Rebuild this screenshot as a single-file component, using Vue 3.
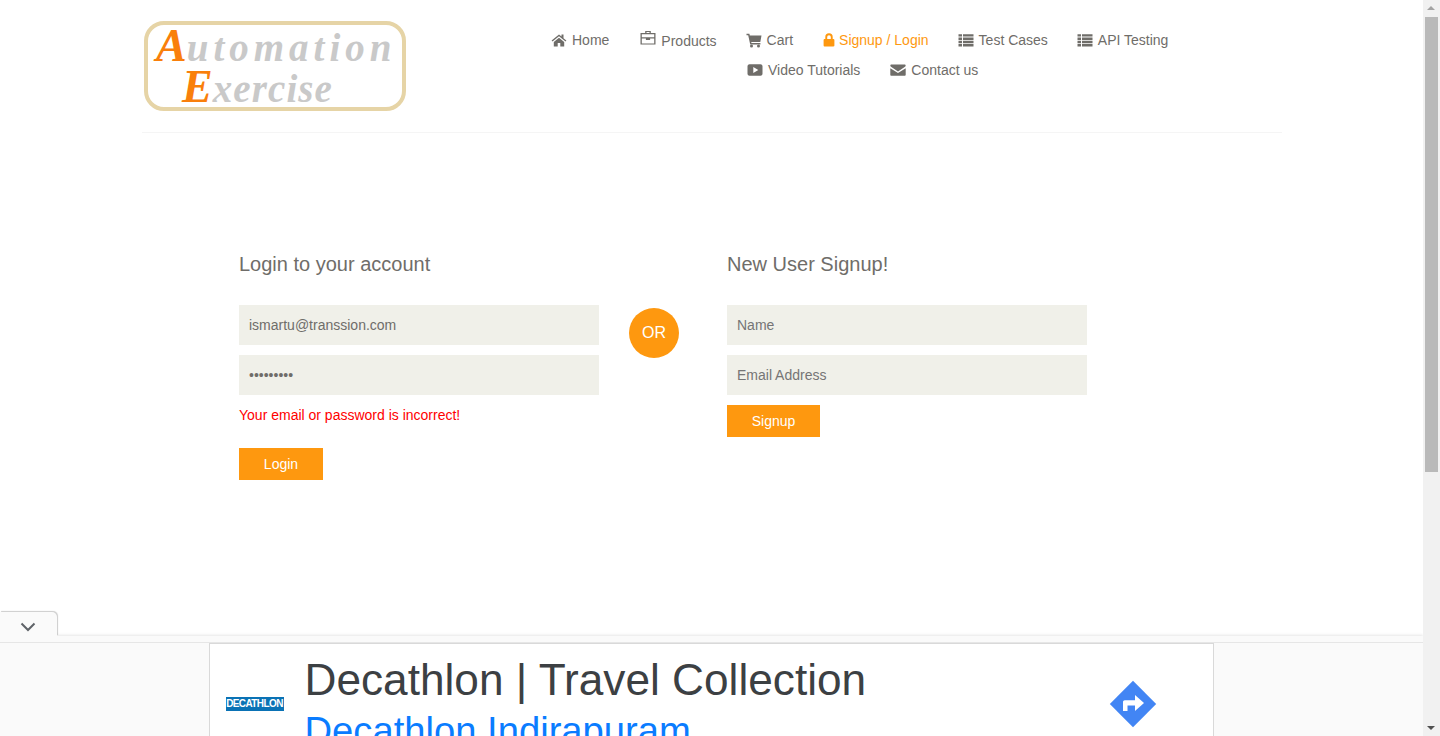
<template>
  <div class="window">
    <div class="page">
      <header class="header">
        <a class="logo">
          <div class="logo-line first"><span class="cap">A</span>utomation</div>
          <div class="logo-line second"><span class="cap">E</span>xercise</div>
        </a>
        <nav class="nav">
          <div class="nav-row">
            <a v-for="item in firstRow" :key="item.label" class="nav-link" :class="{ active: item.active, lower: item.lower }">
              <svg class="icon" :class="item.icon" viewBox="0 0 16 16" fill="currentColor" v-html="icons[item.icon]"></svg>
              <span>{{ item.label }}</span>
            </a>
          </div>
          <div class="nav-row second-row">
            <a v-for="item in secondRow" :key="item.label" class="nav-link">
              <svg class="icon" :class="item.icon" viewBox="0 0 16 16" fill="currentColor" v-html="icons[item.icon]"></svg>
              <span>{{ item.label }}</span>
            </a>
          </div>
        </nav>
      </header>

      <section class="forms">
        <div class="form-col">
          <h2>Login to your account</h2>
          <form class="form" @submit.prevent>
            <input type="email" value="ismartu@transsion.com" placeholder="Email Address" />
            <input type="password" value="123456789" placeholder="Password" />
            <p class="error">Your email or password is incorrect!</p>
            <button class="btn login">Login</button>
          </form>
        </div>
        <div class="or">OR</div>
        <div class="form-col">
          <h2>New User Signup!</h2>
          <form class="form" @submit.prevent>
            <input type="text" placeholder="Name" />
            <input type="email" placeholder="Email Address" />
            <button class="btn signup">Signup</button>
          </form>
        </div>
      </section>

      <div class="ad-bar">
        <div class="ad-tab">
          <svg width="16" height="10" viewBox="0 0 16 10" fill="none" stroke="#5f6368" stroke-width="2"><path d="M1.5 1.5 8 8l6.500-6.500" /></svg>
        </div>
        <div class="ad-strip"></div>
        <div class="ad-body">
          <div class="ad-box">
            <div class="ad-logo">DECATHLON</div>
            <div class="ad-text">
              <div class="ad-title">Decathlon | Travel Collection</div>
              <div class="ad-sub">Decathlon Indirapuram</div>
            </div>
            <svg class="ad-arrow" width="48" height="48" viewBox="0 0 48 48">
              <path fill="#4285f4" d="M24 .8 47.200 24 24 47.200.8 24z" />
              <path fill="#fff" d="M14 31v-9c0-1 .8-1.700 1.700-1.700H26v-5.300l9 8-9 8v-5.500h-7.500V31z" />
            </svg>
          </div>
        </div>
      </div>
    </div>

    <div class="scrollbar">
      <div class="arrow up"></div>
      <div class="track"><div class="thumb"></div></div>
      <div class="arrow down"></div>
    </div>
  </div>
</template>

<script setup>
const icons = {
  home: '<path d="M8 2.600 .6 8.600l.9 1L8 4.300l6.500 5.300.9-1-2.900-2.400V2.500h-2v2zM2.800 10v4.500h3.900v-3.400h2.600v3.400h3.900V10L8 5.800z"/>',
  briefcase: '<path fill-rule="evenodd" d="M5.200 3V.9h5.600V3h4.700v11.600H.5V3zM6.500 3h3V2.100h-3zM1.800 4.200v3.100h12.400V4.200zm0 4.400v4.800h12.400V8.600h-4.100v1.300H5.900V8.600z"/>',
  cart: '<path d="M.5 1.800h2.900l.4 1.700H15.500l-1.200 6.400H5.200l.3 1.200h8.900v1.400H4.200L2.200 3.200H.5z"/><circle cx="5.500" cy="14" r="1.500"/><circle cx="12.500" cy="14" r="1.500"/>',
  lock: '<path fill-rule="evenodd" d="M4.300 7V5a3.700 3.700 0 0 1 7.400 0v2h.8c.5 0 .9.400.9.900v5.700c0 .5-.4.900-.9.900h-9c-.5 0-.9-.4-.9-.9V7.900c0-.5.400-.9.900-.9zm1.900 0h3.600V5a1.800 1.800 0 0 0-3.600 0z"/>',
  list: '<path d="M.5 2.200h3.500v2.400H.5zm4.500 0h10.500v2.400H5zM.5 5.500h3.500v2.400H.5zm4.500 0h10.500v2.400H5zM.5 8.800h3.500v2.400H.5zm4.500 0h10.500v2.400H5zM.5 12h3.500v2.400H.5zm4.500 0h10.500v2.400H5z"/>',
  play: '<path fill-rule="evenodd" d="M2.500 2.300h11c1 0 2 .8 2 2v7.400c0 1.200-1 2-2 2h-11c-1 0-2-.8-2-2V4.300c0-1.200 1-2 2-2zM6.300 5v6L11.300 8z"/>',
  envelope: '<path d="M.3 3.500c0-.6.500-1.100 1.100-1.100h13.200c.6 0 1.100.5 1.100 1.100 0 .5-.3 1-.7 1.300L8 9.400 1 4.800C.6 4.500.3 4 .3 3.500zM.3 6.200 8 11.100l7.700-4.900v6.500c0 .6-.5 1.100-1.100 1.100H1.400c-.6 0-1.100-.5-1.100-1.100z"/>',
}

const firstRow = [
  { label: 'Home', icon: 'home' },
  { label: 'Products', icon: 'briefcase', lower: true },
  { label: 'Cart', icon: 'cart' },
  { label: 'Signup / Login', icon: 'lock', active: true },
  { label: 'Test Cases', icon: 'list' },
  { label: 'API Testing', icon: 'list' },
]

const secondRow = [
  { label: 'Video Tutorials', icon: 'play' },
  { label: 'Contact us', icon: 'envelope' },
]
</script>

<style>
html,
body {
  margin: 0;
  overflow: hidden;
}
</style>

<style scoped>
.window {
  display: flex;
  width: 1440px;
  height: 736px;
  overflow: hidden;
  font-family: "Liberation Sans", Arial, sans-serif;
  color: #6f6d69;
  background: #fff;
}
.page {
  position: relative;
  width: 1423px;
  height: 736px;
  overflow: hidden;
}

/* header */
.header {
  display: flex;
  width: 1140px;
  height: 133px;
  box-sizing: border-box;
  margin-left: 142px;
  padding-top: 21px;
  border-bottom: 1px solid #f5f5f5;
}
.logo {
  flex: none;
  width: 262px;
  height: 90px;
  box-sizing: border-box;
  margin-left: 2px;
  border: 4px solid #e6d4a6;
  border-radius: 20px;
  font-family: "Liberation Serif", serif;
  font-style: italic;
  font-weight: 700;
  color: #c9c9c9;
  overflow: hidden;
}
.logo-line {
  height: 41px;
  line-height: 41px;
  white-space: nowrap;
}
.logo-line.first {
  padding-left: 8px;
  font-size: 39px;
  letter-spacing: 5px;
}
.logo-line.second {
  padding-left: 34px;
  font-size: 39px;
  letter-spacing: 1.100px;
}
.cap {
  font-size: 46px;
  letter-spacing: 0;
  color: #f97f0b;
}
.nav {
  margin-left: 146px;
  padding-top: 4px;
}
.nav-row {
  display: flex;
  gap: 30px;
  height: 30px;
  font-size: 14px;
}
.second-row {
  padding-left: 195px;
}
.nav-link {
  display: flex;
  align-items: center;
  gap: 6px;
  height: 30px;
  white-space: nowrap;
}
.nav-link.lower {
  margin-left: 1px;
}
.nav-link.lower span {
  position: relative;
  top: 1px;
}
.nav-link.active {
  color: #fe980f;
}
.icon {
  flex: none;
  width: 16px;
  height: 16px;
  margin: 0 -1px;
}
.icon.briefcase,
.icon.play,
.icon.envelope {
  margin: 0 -0.500px;
}
.icon.briefcase {
  position: relative;
  top: -2px;
}
.icon.lock {
  margin: 0 -3.500px 0 -2.500px;
}

/* forms */
.forms {
  display: flex;
  align-items: flex-start;
  margin: 116px 0 0 239px;
}
.form-col {
  width: 360px;
}
h2 {
  height: 30px;
  margin: 0 0 26px;
  font-size: 20px;
  font-weight: 400;
  line-height: 30px;
  color: #6f6d69;
}
.form {
  display: flex;
  flex-direction: column;
  align-items: flex-start;
  gap: 10px;
}
input {
  width: 100%;
  height: 40px;
  box-sizing: border-box;
  padding: 0 10px;
  border: 0;
  outline: 0;
  background: #f0f0e9;
  font-family: inherit;
  font-size: 14px;
  color: #6f6d69;
}
input::placeholder {
  color: #757575;
  opacity: 1;
}
.error {
  margin: 0;
  height: 20px;
  font-size: 14px;
  line-height: 20px;
  color: #f00;
}
.btn {
  height: 32px;
  padding: 0;
  border: 0;
  background: #fe980f;
  font-family: inherit;
  font-size: 14px;
  color: #fff;
}
.login {
  width: 84px;
  margin-top: 13px;
}
.signup {
  width: 93px;
}
.or {
  flex: none;
  width: 50px;
  height: 50px;
  margin: 59px 48px 0 30px;
  border-radius: 50%;
  background: #fe980f;
  font-size: 16px;
  line-height: 50px;
  text-align: center;
  color: #fff;
}

/* ad overlay */
.ad-bar {
  position: absolute;
  left: 0;
  right: 0;
  bottom: 0;
  height: 124px;
}
.ad-tab {
  position: relative;
  z-index: 1;
  display: flex;
  align-items: center;
  justify-content: center;
  width: 57px;
  height: 24px;
  box-sizing: border-box;
  padding: 5px 1px 0 0;
  border-radius: 0 5px 0 0;
  background: #fafafa;
  box-shadow: 1px -1px 1px rgba(0, 0, 0, 0.2);
}
.ad-strip {
  height: 6px;
  box-shadow: 0 -1px 3px rgba(0, 0, 0, 0.1);
  background: #fafafa;
  border-bottom: 1px solid #e6e6e6;
}
.ad-body {
  display: flex;
  justify-content: center;
  height: 93px;
  padding-right: 1px;
  background: #fafafa;
  overflow: hidden;
}
.ad-box {
  display: flex;
  align-items: flex-start;
  width: 1005px;
  height: 93px;
  box-sizing: border-box;
  border: 1px solid #d9d9d9;
  border-bottom: 0;
  background: #fff;
  overflow: hidden;
}
.ad-logo {
  flex: none;
  width: 58px;
  height: 14px;
  margin: 53px 21px 0 16px;
  background: #0a72b5;
  font-size: 10px;
  font-weight: 700;
  line-height: 14px;
  letter-spacing: -0.600px;
  text-align: center;
  color: #fff;
}
.ad-text {
  flex: none;
  width: 780px;
}
.ad-title {
  margin-top: 8px;
  font-size: 44.200px;
  line-height: 56px;
  color: #3c4043;
  white-space: nowrap;
}
.ad-sub {
  margin-top: 1px;
  font-size: 38.200px;
  line-height: 44px;
  color: #0a7cff;
  white-space: nowrap;
}
.ad-arrow {
  flex: none;
  margin: 36px 0 0 24px;
}

/* scrollbar */
.scrollbar {
  display: flex;
  flex-direction: column;
  flex: none;
  width: 17px;
  height: 736px;
  background: #f1f1f1;
}
.arrow {
  position: relative;
  height: 17px;
  flex: none;
}
.arrow::after {
  content: "";
  position: absolute;
  left: 4px;
  border-left: 4px solid transparent;
  border-right: 4px solid transparent;
}
.arrow.up::after {
  top: 6px;
  border-bottom: 4px solid #a3a3a3;
}
.arrow.down::after {
  top: 7px;
  border-top: 4px solid #505050;
}
.track {
  flex: 1;
  padding: 0 2px;
}
.thumb {
  height: 455px;
  background: #b9b9b9;
}
</style>
